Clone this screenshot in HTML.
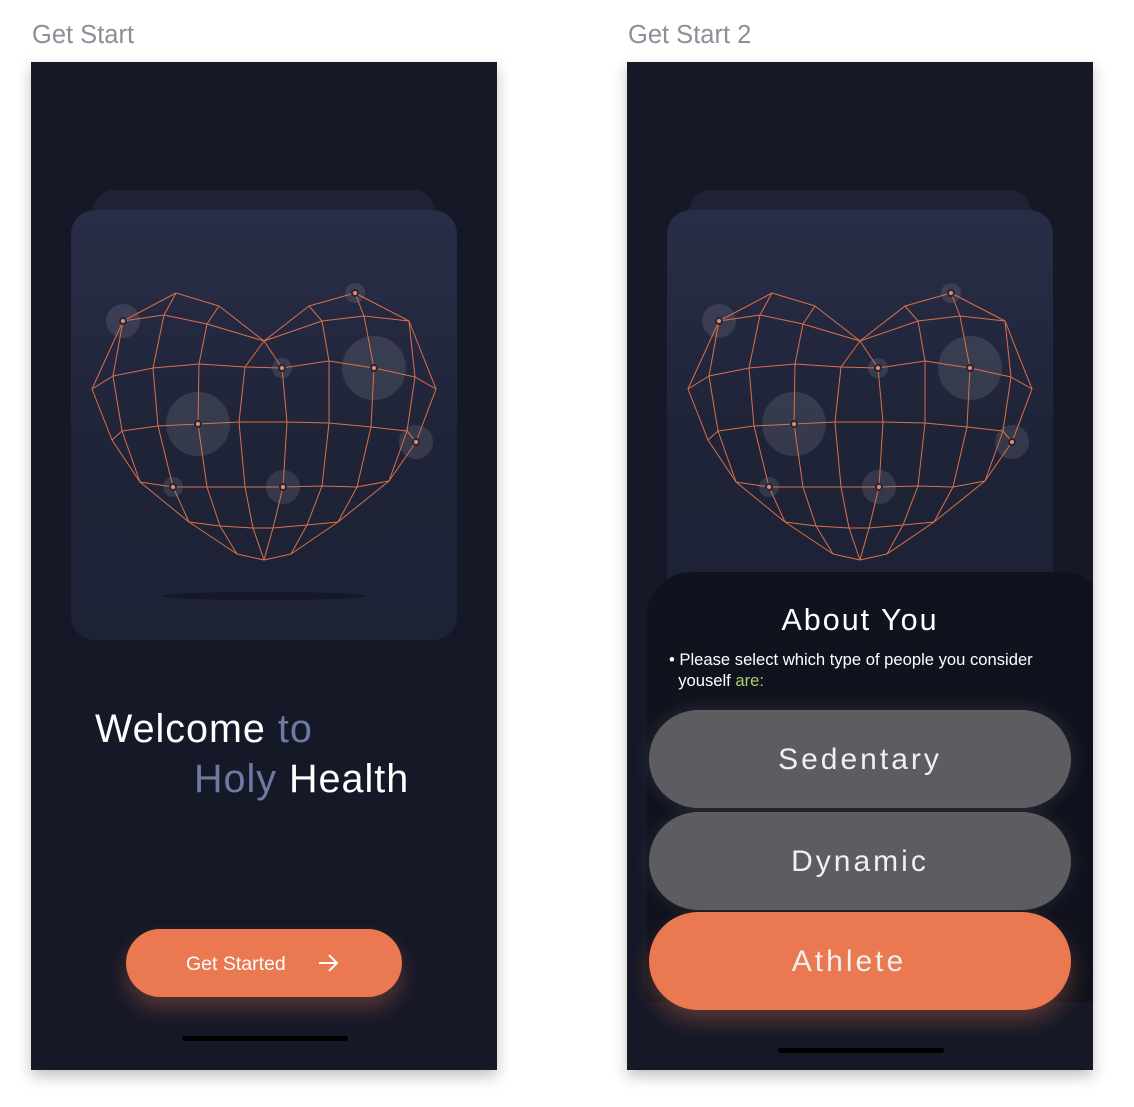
<!DOCTYPE html>
<html><head><meta charset="utf-8"><style>
*{margin:0;padding:0;box-sizing:border-box}
body{width:1134px;height:1107px;background:#fff;position:relative;overflow:hidden;font-family:"Liberation Sans",sans-serif}
.lbl{position:absolute;top:21px;font-size:25.5px;color:#8c8f98}
.phone{position:absolute;top:62px;width:466px;height:1008px;background:#151827;overflow:hidden;box-shadow:0 6px 14px rgba(0,0,0,.25)}
.back{position:absolute;left:62px;top:128px;width:342px;height:60px;border-radius:22px;background:#1f2334}
.card{position:absolute;left:40px;top:148px;width:386px;height:430px;border-radius:24px;background:linear-gradient(#292d47,#1f2337 60%,#1e2235)}
.home{position:absolute;width:166px;height:5px;border-radius:3px;background:#000}
.pill{position:absolute;left:22px;width:422px;height:98px;border-radius:49px;color:#f0f0f0;text-align:center;line-height:100px;font-size:30px;letter-spacing:3px}
</style></head><body>
<div class="lbl" style="left:32px">Get Start</div>
<div class="lbl" style="left:628px">Get Start 2</div>

<div class="phone" style="left:31px">
 <div class="back"></div><div class="card"></div>
 <div style="position:absolute;left:64px;top:645px;font-size:39.5px;color:#fff;letter-spacing:1px">Welcome <span style="color:#6e7aa4">to</span></div>
 <div style="position:absolute;left:163px;top:695px;font-size:39.5px;color:#fff;letter-spacing:1px"><span style="color:#6e7aa4">Holy</span> Health</div>
 <div style="position:absolute;left:95px;top:867px;width:276px;height:68px;border-radius:34px;background:#ea7850;box-shadow:0 12px 22px rgba(234,120,80,.3);color:#fff;font-size:19.5px;line-height:70px;padding-left:60px">Get Started
  <svg style="position:absolute;left:192px;top:24px" width="22" height="20" viewBox="0 0 22 20"><path d="M1 10H19M11 2L19 10L11 18" fill="none" stroke="#fff" stroke-width="2"/></svg></div>
 <div class="home" style="left:151px;top:974px"></div>
</div>

<div class="phone" style="left:627px">
 <div class="back"></div><div class="card" style="height:400px;border-radius:24px 24px 0 0"></div>
 <div style="position:absolute;left:20px;top:510px;width:460px;height:430px;border-radius:44px 44px 0 0;background:#10131d"></div>
 <div style="position:absolute;left:20px;top:541px;width:426px;text-align:center;color:#fff;font-size:30.5px;letter-spacing:2px">About You</div>
 <div style="position:absolute;left:42px;top:587px;width:420px;color:#fff;font-size:16.6px;line-height:21px">• Please select which type of people you consider<br>&nbsp;&nbsp;youself <span style="color:#a6cf6a">are:</span></div>
 <div class="pill" style="top:648px;background:#5d5c61;box-shadow:0 0 18px rgba(120,125,140,.25)">Sedentary</div>
 <div class="pill" style="top:750px;background:#5d5c61;box-shadow:0 0 18px rgba(120,125,140,.2)">Dynamic</div>
 <div class="pill" style="top:850px;background:#ea7850;box-shadow:0 12px 22px rgba(234,120,80,.3);padding-right:22px">Athlete</div>
 <div class="home" style="left:151px;top:986px"></div>
</div>

<svg style="position:absolute;left:0;top:0" width="1134" height="1107">
<defs><g id="h">
 <g fill="#ffffff" fill-opacity=".1">
  <circle cx="123" cy="321" r="17"/><circle cx="355" cy="293" r="10"/><circle cx="374" cy="368" r="32"/><circle cx="282" cy="368" r="10"/><circle cx="198" cy="424" r="32"/><circle cx="416" cy="442" r="17"/><circle cx="173" cy="487" r="10"/><circle cx="283" cy="487" r="17"/>
 </g>
 <g fill="none" stroke="#d9704a" stroke-width="1" stroke-linejoin="round">
  <path d="M123 321L176 293L219 306L264 341L309 306L355 293L409 321L436 389L416 442L389 481L338 522L291 554L264 560L237 554L189 522L140 482L112 440L92 389Z"/>
  <path d="M123 321L164 315L207 324L264 341L322 321L364 316L409 321"/>
  <path d="M92 389L113 376L153 368L199 364L245 367L282 368L329 361L374 368L415 377L436 389"/>
  <path d="M112 440L122 431L158 426L198 424L239 422L287 422L329 423L371 427L407 431L416 442"/>
  <path d="M140 482L173 487L207 487L245 487L283 487L322 486L357 487L389 481"/>
  <path d="M189 522L220 526L253 528L273 528L307 525L338 522"/>
  <path d="M123 321L113 376L122 431L140 482"/>
  <path d="M176 293L164 315L153 368L158 426L173 487L189 522"/>
  <path d="M219 306L207 324L199 364L198 424L207 487L220 526L237 554"/>
  <path d="M264 341L245 367L239 422L245 487L253 528L264 560"/>
  <path d="M264 341L282 368L287 422L283 487L273 528L264 560"/>
  <path d="M309 306L322 321L329 361L329 423L322 486L307 525L291 554"/>
  <path d="M355 293L364 316L374 368L371 427L357 487L338 522"/>
  <path d="M409 321L415 377L407 431L389 481"/>
 </g>
 <g fill="#f08a5c" stroke="#23273d" stroke-width="2">
  <circle cx="123" cy="321" r="3"/><circle cx="355" cy="293" r="3"/><circle cx="374" cy="368" r="3"/><circle cx="282" cy="368" r="3"/><circle cx="198" cy="424" r="3"/><circle cx="416" cy="442" r="3"/><circle cx="173" cy="487" r="3"/><circle cx="283" cy="487" r="3"/>
 </g>
</g></defs>
<ellipse cx="264" cy="596" rx="103" ry="4" fill="#151828"/>
<use href="#h"/>
<use href="#h" transform="translate(596,0)"/>
</svg>
</body></html>
